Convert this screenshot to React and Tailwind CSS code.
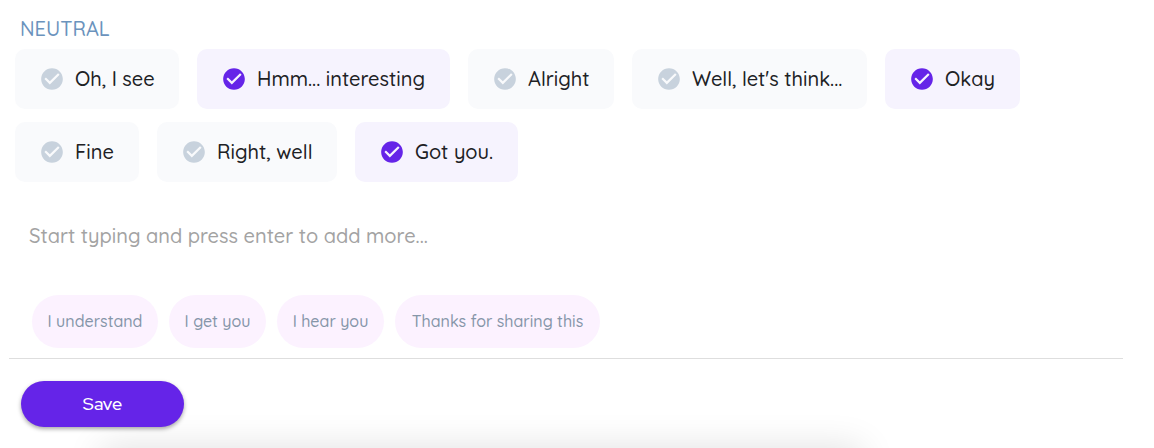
import { useState } from 'react';
import { MdCheckCircle } from 'react-icons/md';
import clsx from 'clsx';

const INITIAL_PHRASES = [
  { text: 'Oh, I see', selected: false, width: 'min-w-[164px]' },
  { text: 'Hmm... interesting', selected: true, width: 'min-w-[253px]' },
  { text: 'Alright', selected: false, width: 'min-w-[146px]' },
  { text: "Well, let's think...", selected: false, width: 'min-w-[235px]' },
  { text: 'Okay', selected: true, width: 'min-w-[135px]' },
  { text: 'Fine', selected: false, width: 'min-w-[124px]' },
  { text: 'Right, well', selected: false, width: 'min-w-[180px]' },
  { text: 'Got you.', selected: true, width: 'min-w-[163px]' },
];

const INITIAL_SUGGESTIONS = [
  { text: 'I understand', width: 'min-w-[126px]' },
  { text: 'I get you', width: 'min-w-[97px]' },
  { text: 'I hear you', width: 'min-w-[107px]' },
  { text: 'Thanks for sharing this', width: 'min-w-[205px]' },
];

const PhraseChip = ({ phrase, onToggle }) => (
  <label
    className={clsx(
      'relative flex h-[60px] cursor-pointer items-center gap-[10px] rounded-[10px] pl-6 pr-5',
      phrase.width,
      phrase.selected ? 'bg-[#f6f3fe]' : 'bg-[#f9fafc]'
    )}
  >
    <input type="checkbox" className="sr-only" checked={phrase.selected} onChange={onToggle} />
    <MdCheckCircle
      className={clsx('size-[26px] shrink-0', phrase.selected ? 'text-[#6524e8]' : 'text-[#c8d2dd]')}
    />
    <span className="whitespace-nowrap text-[20px] font-medium leading-6 text-[#202124]">{phrase.text}</span>
  </label>
);

const App = () => {
  const [phrases, setPhrases] = useState(INITIAL_PHRASES);
  const [suggestions, setSuggestions] = useState(INITIAL_SUGGESTIONS);
  const [draft, setDraft] = useState('');

  const togglePhrase = (text) => {
    setPhrases(phrases.map((p) => (p.text === text ? { ...p, selected: !p.selected } : p)));
  };

  const addPhrase = (text) => {
    if (!text.trim() || phrases.some((p) => p.text === text)) return;
    setPhrases([...phrases, { text, selected: true }]);
  };

  const handleKeyDown = (e) => {
    if (e.key !== 'Enter') return;
    e.preventDefault();
    addPhrase(draft);
    setDraft('');
  };

  const handleSuggestion = (text) => {
    addPhrase(text);
    setSuggestions(suggestions.filter((s) => s.text !== text));
  };

  return (
    <form
      onSubmit={(e) => e.preventDefault()}
      className="flex min-h-screen flex-col overflow-hidden bg-white pl-[9px] pr-[31px] font-[Quicksand,Lato,sans-serif]"
    >
      <h2 className="mt-[17px] pl-[11px] text-[20px] font-medium leading-6 text-[#6b93bd]">NEUTRAL</h2>

      <div className="mt-2 flex flex-wrap gap-x-[18px] gap-y-[13px] pl-[6px]">
        {phrases.map((phrase) => (
          <PhraseChip key={phrase.text} phrase={phrase} onToggle={() => togglePhrase(phrase.text)} />
        ))}
      </div>

      <input
        type="text"
        aria-label="Add a phrase"
        value={draft}
        onChange={(e) => setDraft(e.target.value)}
        onKeyDown={handleKeyDown}
        placeholder="Start typing and press enter to add more..."
        className="mt-[23px] h-[60px] w-full px-5 text-[20px] font-medium text-[#202124] outline-none placeholder:text-[#a3a3a3]"
      />

      <div className="mt-[30px] flex flex-wrap gap-[11px] border-b border-[#dedede] pb-[10px] pl-[23px]">
        {suggestions.map((s) => (
          <button
            key={s.text}
            type="button"
            onClick={() => handleSuggestion(s.text)}
            className={clsx('h-[53px] whitespace-nowrap rounded-full bg-[#fcf2ff] px-3 pb-[2px] text-[16px] font-medium text-[#8696a9]', s.width)}
          >
            {s.text}
          </button>
        ))}
      </div>

      <button
        type="submit"
        className="relative z-10 ml-3 mt-[22px] h-[46px] w-[163px] rounded-full bg-[#6524e8] pb-[2px] font-['Red_Hat_Display',Montserrat,Lato,sans-serif] text-[18px] font-medium text-white shadow-[0_2px_4px_rgba(0,0,0,0.35)]"
      >
        Save
      </button>

      <div className="ml-[120px] mr-[289px] mt-auto h-0 shadow-[0_27px_36px_28px_rgba(0,0,0,0.12)]" />
    </form>
  );
};

export default App;
